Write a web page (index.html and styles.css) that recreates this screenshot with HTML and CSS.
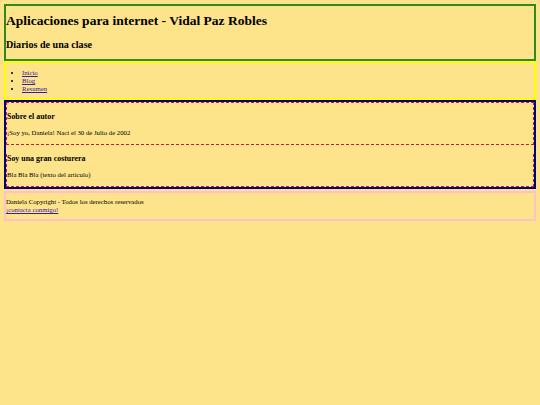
FILE: index.html
```html
<!DOCTYPE html>
<html lang="es">
<head>
<meta charset="utf-8">
<title>Aplicaciones para internet</title>
<link rel="stylesheet" href="styles.css">
</head>
<body>
<header class="site-header">
  <h1 class="title">Aplicaciones para internet - Vidal Paz Robles</h1>
  <h2 class="subtitle">Diarios de una clase</h2>
</header>
<nav class="site-nav">
  <ul class="nav-list">
    <li><a href="#">Inicio</a></li>
    <li><a href="#">Blog</a></li>
    <li><a href="#">Resumen</a></li>
  </ul>
</nav>
<main class="content">
  <section class="box">
    <h3 class="box-title">Sobre el autor</h3>
    <p class="box-text">¡Soy yo, Daniela! Naci el 30 de Julio de 2002</p>
  </section>
  <article class="box box-next">
    <h3 class="box-title">Soy una gran costurera</h3>
    <p class="box-text">Bla Bla Bla (texto del articulo)</p>
  </article>
</main>
<footer class="site-footer">
  <div class="footer-text">Daniela Copyright - Todos los derechos reservados</div>
  <a href="#" class="footer-link">¡contacta conmigo!</a>
</footer>
</body>
</html>
```

FILE: styles.css
```css
html {
  background: #fde38a;
}
body {
  margin: 4px;
  font-family: "Liberation Serif", "Times New Roman", serif;
  font-size: 6.75px;
  line-height: 8px;
  color: #000;
}
a {
  color: #3a1aa0;
}
.site-header {
  border: 2px solid #2e8a1c;
}
.title {
  font-size: 13.5px;
  line-height: 16px;
  margin: 7px 0 10px;
}
.subtitle {
  font-size: 10.1px;
  line-height: 12px;
  margin: 0 0 8px;
}
.site-nav {
  border: 2px solid #ffff00;
}
.nav-list {
  margin: 6px 0 5px;
  padding-left: 16px;
}
.content {
  border: 2px solid #000080;
}
.box {
  border: 1px dashed #c0203a;
}
.box-next {
  border-top: none;
}
.box-title {
  font-size: 7.9px;
  line-height: 10px;
  margin: 9px 0 7px;
}
.box-text {
  margin: 7px 0;
}
.site-footer {
  margin-top: 2px;
  border: 2px solid #ffc0cb;
  padding: 5px 0;
}
```
